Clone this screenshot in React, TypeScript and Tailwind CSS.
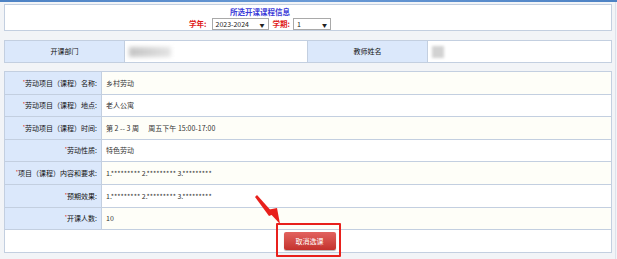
import React from 'react';

const font = { fontFamily: '"Noto Sans CJK SC", "Noto Sans", sans-serif' };

const rows = [
  { label: '劳动项目（课程）名称:', value: '乡村劳动' },
  { label: '劳动项目（课程）地点:', value: '老人公寓' },
  { label: '劳动项目（课程）时间:', value: '第 2 -- 3 周\u00a0\u00a0\u00a0\u00a0\u00a0\u00a0周五下午 15:00-17:00' },
  { label: '劳动性质:', value: '特色劳动' },
  { label: '项目（课程）内容和要求:', value: '1.********* 2.********* 3.*********' },
  { label: '预期效果:', value: '1.********* 2.********* 3.*********' },
  { label: '开课人数:', value: '10' },
];

const Select = ({ value, width }: { value: string; width: string }) => (
  <div
    className={`flex items-center justify-between h-[12px] ${width} border border-[#a9a9a9] bg-white pl-[3px] pr-[3px] text-[7px] text-[#222]`}
  >
    <span>{value}</span>
    <span className="text-[5px] leading-none">▼</span>
  </div>
);

export default function App() {
  return (
    <div className="relative w-[617px] h-[259px] overflow-hidden bg-[#f2f4f7]" style={font}>
      {/* top bar */}
      <div className="h-[2px] bg-gradient-to-r from-[#4d82c4] via-[#6a9ad6] to-[#4d82c4]" />

      <div className="pl-[4px] pr-[5px] pt-[2px]">
        {/* 标题 */}
        <div className="h-[27px] border border-[#c3cfe0] bg-white flex flex-col items-center pt-[2px] pr-[96px]">
          <div className="text-[7.5px] leading-[9px] font-bold text-[#3b3bd8]">所选开课课程信息</div>
          <div className="flex items-center gap-[3px] mt-[2px]">
            <span className="text-[7.5px] font-bold text-[#e01818] mr-[2px]">学年:</span>
            <Select value="2023-2024" width="w-[57px]" />
            <span className="text-[7.5px] font-bold text-[#e01818] ml-[1px]">学期:</span>
            <Select value="1" width="w-[38px]" />
          </div>
        </div>

        {/* 开课部门 / 教师姓名 */}
        <div className="mt-[9px] h-[23px] border border-[#c3cfe0] bg-white flex text-[7px] text-[#111]">
          <div className="w-[120px] bg-[#dbe8fb] flex items-center justify-center border-r border-[#c3cfe0]">开课部门</div>
          <div className="w-[182px] flex items-center pl-[4px]">
            <div className="w-[42px] h-[10px] bg-gradient-to-r from-[#c4c4c4] to-[#e4e4e4] blur-[2px]" />
          </div>
          <div className="w-[121px] bg-[#dbe8fb] flex items-center justify-center border-x border-[#c3cfe0]">教师姓名</div>
          <div className="flex-1 flex items-center pl-[4px]">
            <div className="w-[12px] h-[12px] bg-[#d2d2d2] blur-[1.5px]" />
          </div>
        </div>

        {/* 课程信息 */}
        <table className="mt-[8px] w-full border-collapse border border-[#c3cfe0] bg-white text-[7px]">
          <tbody>
            {rows.map((r, i) => (
              <tr key={i} className="h-[22.6px]">
                <td className="w-[97px] bg-[#dbe8fb] border border-[#c3cfe0] text-right pr-[4px] text-[#111] whitespace-nowrap">
                  <span className="text-[#e01818] text-[5px] align-top">*</span>
                  {r.label}
                </td>
                <td
                  className={`border border-[#c3cfe0] pl-[4px] text-[#333] whitespace-pre ${
                    i % 2 === 0 ? 'bg-[#fefef8]' : 'bg-white'
                  }`}
                >
                  {r.value}
                </td>
              </tr>
            ))}
            <tr className="h-[22.6px]">
              <td colSpan={2} className="border border-[#c3cfe0]">
                <div className="flex justify-center pl-[3px]">
                  <button className="w-[52px] h-[18px] rounded-[2px] bg-gradient-to-b from-[#e2625e] to-[#c4312d] text-white text-[7px] shadow-[0_1px_1px_rgba(0,0,0,0.3)]">
                    取消选课
                  </button>
                </div>
              </td>
            </tr>
          </tbody>
        </table>
      </div>

      {/* scrollbar edge */}
      <div className="absolute top-[2px] right-[1px] w-[1px] h-[257px] bg-[#dde3ec]" />

      {/* annotation: red frame + arrow */}
      <div className="absolute left-[276px] top-[223px] w-[65px] h-[34px] border-2 border-[#e8201c] rounded-[1px]" />
      <svg className="absolute left-[250px] top-[193px]" width="36" height="34" viewBox="0 0 36 34">
        <polygon points="5,4 7,2 24,21 19,23" fill="#e8201c" />
        <polygon points="17,17 27,15 30,31 " fill="#e8201c" />
      </svg>
    </div>
  );
}
